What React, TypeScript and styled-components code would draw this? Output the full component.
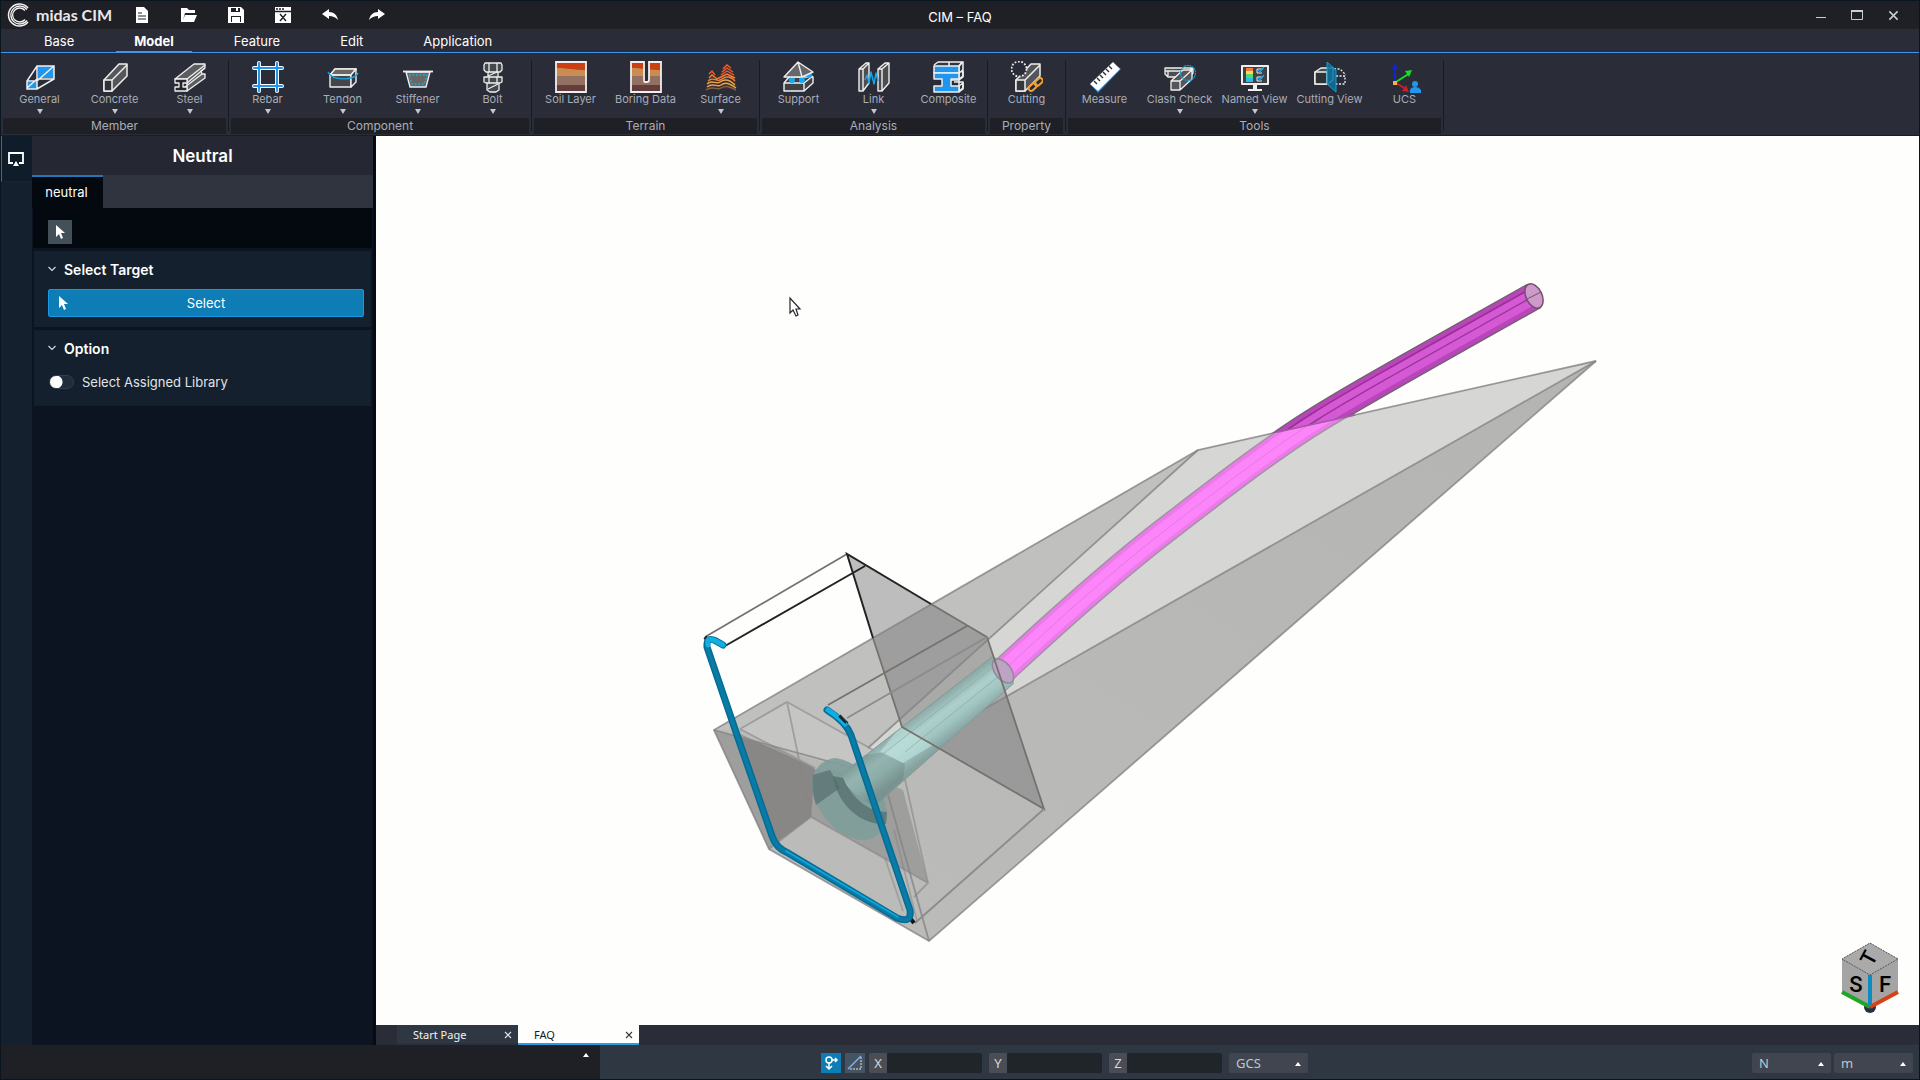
import React, { useState } from "react";
import styled, { createGlobalStyle } from "styled-components";

const GlobalStyle = createGlobalStyle`
  *, *::before, *::after { box-sizing: border-box; }
  html, body { margin: 0; }
  body { background: #0b1119; }
  button, input, select { font: inherit; color: inherit; margin: 0; }
  button { background: none; border: 0; padding: 0; cursor: pointer; }
`;

const uiFont = `Inter, "Liberation Sans", sans-serif`;
const statusFont = `"Noto Sans", "Open Sans", sans-serif`;

const Shell = styled.div`
  display: flex;
  flex-direction: column;
  height: 100vh;
  min-height: 600px;
  border: 1px solid #0b1520;
  font-family: ${uiFont};
  font-size: 13px;
  color: #fff;
  background: #0b1420;
  overflow: hidden;
`;

const TitleBar = styled.header`
  display: grid;
  grid-template-columns: 1fr auto 1fr;
  align-items: center;
  height: 28px;
  flex: none;
  background: #1f2026;
`;
const TitleLeft = styled.div`
  display: flex;
  align-items: center;
  padding-left: 6px;
`;
const Brand = styled.div`
  display: flex;
  align-items: center;
  gap: 5px;
  width: 111px;
  font-family: Lato, ${uiFont};
  font-weight: 700;
  font-size: 16px;
  line-height: 24px;
  color: #e8e8ea;
`;
const QuickButton = styled.button`
  width: 47px;
  height: 24px;
  display: grid;
  place-items: center;
`;
const WindowTitle = styled.h1`
  margin: 0;
  padding-top: 4px;
  font-size: 13px;
  font-weight: 400;
  line-height: 20px;
`;
const WindowButtons = styled.div`
  display: flex;
  justify-content: flex-end;
  padding-right: 8px;
`;
const WindowButton = styled.button`
  width: 36px;
  height: 26px;
  display: grid;
  place-items: center;
`;

const MenuBar = styled.nav`
  display: flex;
  gap: 24px;
  height: 24px;
  flex: none;
  padding-left: 25px;
  background: #2a2c37;
  border-bottom: 1px solid #3a96f0;
`;
const MenuTab = styled.button<{ $active?: boolean }>`
  height: 23px;
  padding: 3px 18px 0;
  line-height: 19px;
  font-weight: ${(p) => (p.$active ? 700 : 400)};
  border-bottom: 1px solid ${(p) => (p.$active ? "#3a96f0" : "transparent")};
`;

const Ribbon = styled.div`
  display: flex;
  flex: none;
  height: 83px;
  padding-left: 1px;
  background: #2a2c37;
  border-bottom: 1px solid #1a1d26;
`;
const RibbonGroup = styled.section`
  display: flex;
  flex-direction: column;
  padding-top: 8px;
`;
const RibbonItems = styled.div`
  display: flex;
  height: 57px;
`;
const RibbonSeparator = styled.div`
  width: 1px;
  height: 71px;
  margin: 7px 1px 0;
  background: #181b24;
`;
const RibbonButton = styled.button`
  display: flex;
  flex-direction: column;
  align-items: center;
  width: 75px;
  font-size: 11px;
  line-height: 12px;
  color: #a9adb8;
  white-space: nowrap;
  svg { flex: none; }
`;
const DropMark = styled.svg`
  margin-top: 4px;
`;
const GroupName = styled.div`
  margin: 0 1px;
  height: 16px;
  font-size: 12px;
  line-height: 16px;
  text-align: center;
  color: #a9adb8;
  background: #1f2026;
`;

const Workspace = styled.main`
  display: flex;
  flex: 1;
  min-height: 0;
`;
const Rail = styled.div`
  width: 31px;
  flex: none;
  background: #14202d;
`;
const RailButton = styled.button`
  display: grid;
  place-items: center;
  width: 31px;
  height: 46px;
  padding-right: 2px;
  border-left: 1px solid #1778ac;
  border-bottom: 1px solid #1b222c;
  background: #0f1c29;
`;
const Panel = styled.aside`
  width: 341px;
  flex: none;
  background: #0b1420;
`;
const PanelTitle = styled.h2`
  margin: 0;
  height: 39px;
  line-height: 40px;
  text-align: center;
  font-size: 17px;
  font-weight: 600;
  background: #252833;
`;
const PanelTabs = styled.div`
  display: flex;
  height: 33px;
  background: #2f343f;
`;
const PanelTab = styled.button`
  width: 71px;
  padding: 0 2px 2px 0;
  border-top: 2px solid #2676b5;
  background: #03090f;
`;
const PanelTools = styled.div`
  height: 40px;
  margin: 0 1px;
  padding: 12px 15px;
  background: #03090f;
`;
const PointerButton = styled.button`
  display: grid;
  place-items: center;
  width: 24px;
  height: 24px;
  background: #435059;
`;
const PanelSection = styled.section`
  height: 76px;
  margin: 3px 2px 0;
  padding: 6px 7px 0 14px;
  background: #14202d;
`;
const SectionTitle = styled.button`
  display: flex;
  align-items: center;
  gap: 8px;
  height: 24px;
  font-size: 14px;
  font-weight: 600;
`;
const SelectButton = styled.button`
  display: flex;
  align-items: center;
  width: 100%;
  height: 28px;
  margin-top: 8px;
  padding: 0 8px;
  border: 1px solid #1a98e8;
  border-radius: 2px;
  background: #0e7db5;
  span { flex: 1; padding-right: 12px; text-align: center; }
`;
const SwitchLabel = styled.label`
  display: flex;
  align-items: center;
  gap: 8px;
  height: 20px;
  margin-top: 12px;
  padding-left: 1px;
  color: #e0e4e8;
`;
const Switch = styled.input`
  appearance: none;
  width: 25px;
  height: 14px;
  border: 1px solid #343d4e;
  border-radius: 7px;
  background: radial-gradient(circle at 6px 6px, #fff 6px, transparent 7px) #222c3b;
  &:checked {
    background: radial-gradient(circle at 17px 6px, #fff 6px, transparent 7px) #0e7db5;
  }
`;

const Documents = styled.div`
  display: flex;
  flex-direction: column;
  flex: 1;
  min-width: 0;
  border-left: 3px solid #050a14;
`;
const Viewport = styled.div`
  position: relative;
  flex: 1;
  min-height: 0;
  background: #fefefd;
`;
const SceneSvg = styled.svg`
  display: block;
  width: 100%;
  height: 100%;
`;
const NavCube = styled.svg`
  position: absolute;
  right: 19px;
  bottom: 11px;
`;
const DocTabs = styled.div`
  display: flex;
  height: 20px;
  flex: none;
  padding-left: 21px;
  background: #2a2c37;
  font-family: ${statusFont};
  font-size: 11px;
`;
const DocTab = styled.div<{ $active?: boolean }>`
  display: flex;
  align-items: center;
  justify-content: space-between;
  width: 121px;
  height: 20px;
  padding: 2px 6px 0 16px;
  color: ${(p) => (p.$active ? "#15181c" : "#f1f3f5")};
  background: ${(p) => (p.$active ? "#fefefd" : "#2f3742")};
  border-bottom: 2px solid ${(p) => (p.$active ? "#2a9be6" : "#2b323d")};
  button { line-height: 16px; }
  button:last-child { display: grid; place-items: center; }
`;

const StatusBar = styled.footer`
  display: flex;
  flex: none;
  height: 34px;
  background: #2f3742;
  font-family: ${statusFont};
  font-size: 13px;
`;
const MessagePane = styled.div`
  display: flex;
  justify-content: flex-end;
  align-items: flex-start;
  width: 599px;
  flex: none;
  padding: 7px 10px 0 0;
  background: #1f2026;
`;
const MessageToggle = styled.button`
  display: grid;
  place-items: center;
  width: 8px;
  height: 6px;
`;
const StatusMain = styled.div`
  display: flex;
  flex: 1;
  align-items: flex-start;
  padding: 8px 3px 0 221px;
`;
const StatusToggle = styled.button<{ $active?: boolean }>`
  display: grid;
  place-items: center;
  width: 20px;
  height: 20px;
  margin-right: 4px;
  background: ${(p) => (p.$active ? "#0e7db5" : "#465462")};
`;
const Coordinate = styled.label`
  display: flex;
  height: 20px;
  margin-right: 7px;
  line-height: 20px;
  color: #d6dadd;
  span { width: 18px; text-align: center; background: #4a4d56; border-radius: 2px 0 0 2px; }
  input { width: 95px; padding: 0 4px; border: 0; border-radius: 0 2px 2px 0; background: #1f2529; }
`;
const UnitBox = styled.span`
  position: relative;
  width: 79px;
  height: 20px;
  margin-right: 3px;
  select {
    appearance: none;
    display: block;
    width: 100%;
    height: 20px;
    padding: 0 7px;
    border: 0;
    border-radius: 2px;
    color: #bcc7d3;
    background: #41454f;
  }
  svg { position: absolute; right: 7px; top: 9px; pointer-events: none; }
`;
const Spacer = styled.div`
  flex: 1;
`;

const UpMark = () => (
  <svg width="6" height="4" viewBox="0 0 6 4" aria-hidden="true"><path d="M3 0 6 4H0Z" fill="#fff" /></svg>
);
const Cross = ({ color, size = 8 }: { color: string; size?: number }) => (
  <svg width={size} height={size} viewBox="0 0 8 8" aria-hidden="true">
    <path d="M1 1l6 6M7 1 1 7" stroke={color} strokeWidth="1.1" />
  </svg>
);
const Pointer = () => (
  <svg width="12" height="16" viewBox="0 0 12 16" aria-hidden="true">
    <path d="M2 1v12l3-3 2 5 2-1-2-5h4Z" fill="#fff" />
  </svg>
);
const Chevron = () => (
  <svg width="8" height="6" viewBox="0 0 8 6" aria-hidden="true">
    <path d="M.5 1 4 4.5 7.500 1" fill="none" stroke="#d8dde2" strokeWidth="1.1" />
  </svg>
);

const W = "#f0efed";
const B = "#2196ef";
const G = "#5b5d63";

const ribbonIcons: Record<string, React.ReactNode> = {
  General: (
    <g fill="none" stroke={W} strokeWidth="1.5">
      <path d="M14 5h16v12H14Z" fill={B} stroke="none" />
      <path d="M3 21h10v7H3Z" fill={B} stroke="none" />
      <path d="M13 5h17v13L13 28H3v-8ZM3 20h10v8M13 20 30 5M13 5v13l17 0M13 18 3 27" />
    </g>
  ),
  Concrete: (
    <g stroke={W} strokeWidth="1.5" strokeLinejoin="round">
      <path d="M5 19 20 3h8v12L13 30H5Z" fill="#55565b" />
      <path d="M5 19h8v11H5Z" fill="#303238" />
      <path d="M13 19 28 4" fill="none" />
    </g>
  ),
  Steel: (
    <g stroke={W} strokeWidth="1.3" strokeLinejoin="round">
      <path d="M1 18 20 3h11v4l-4 3 1 3h3v4L13 30V18Z" fill={G} />
      <path d="M13 18 31 4M13 22 31 7M11 26 28 13" fill="none" />
      <path d="M1 18h12v4H9v4h4v4H1v-4h4v-4H1Z" fill="#26282f" />
    </g>
  ),
  Rebar: (
    <g strokeLinecap="round">
      <path d="M7 2v28M25 2v28M2 7h28M2 25h28" stroke="#fff" strokeWidth="4" />
      <path d="M7 2v28M25 2v28M2 7h28M2 25h28" stroke={B} strokeWidth="2.200" />
    </g>
  ),
  Tendon: (
    <g stroke={W} strokeWidth="1.4" strokeLinejoin="round">
      <path d="M3 14 8 8h21l-5 6v12H3Z" fill="#44464c" />
      <path d="M3 14 8 8h21l-5 6Z" fill="#6b6765" />
      <path d="M24 14v12l5-5V8ZM3 14h21" fill="#34363d" />
      <path d="M1 11c4 9 27 9 30 1" fill="none" stroke="#17a6e6" />
    </g>
  ),
  Stiffener: (
    <g>
      <path d="M4 11h24l-4 15H8Z" fill="#696663" stroke={W} strokeWidth="1.400" />
      <path d="M1 10.500h30" stroke={W} strokeWidth="1.800" />
      <path d="M7 14h18l-3 9H10Z" fill="none" stroke="#18a9ec" strokeWidth="1.300" strokeDasharray="2 1.500" />
    </g>
  ),
  Bolt: (
    <g fill="#44484f" stroke={W} strokeWidth="1.300" strokeLinejoin="round">
      <path d="M8 2h16l1 2v5l-2 2H9L7 9V4ZM12 2v9M20 2v9M11 11h10v5H11ZM7 16h18v5l-2 1H9l-2-1ZM12 16v6M20 16v6M10 22h12v7l-3 2h-6l-3-2Z" />
      <path d="m11 15 9-4M11 28l10-5" />
    </g>
  ),
  "Soil Layer": (
    <g>
      <path d="M1 1h30v30H1Z" fill="#cb4012" />
      <path d="M1 7c11 0 16 2 30 2v7H1Z" fill="#c98d52" />
      <path d="M1 15h30v10H1Z" fill="#947062" />
      <path d="M1 24h30v7H1Z" fill="#633d3b" />
      <path d="M1 1h30v30H1Z" fill="none" stroke={W} strokeWidth="1.800" />
    </g>
  ),
  "Boring Data": (
    <g>
      <path d="M1 1h30v30H1Z" fill="#cb4012" />
      <path d="M1 7c11 0 16 2 30 2v7H1Z" fill="#c98d52" />
      <path d="M1 15h30v10H1Z" fill="#947062" />
      <path d="M1 24h30v7H1Z" fill="#633d3b" />
      <path d="M13 0h6v19q0 2-3 2t-3-2Z" fill="#2a2c37" />
      <path d="M14 1H1v30h30V1H19v18q0 2-2 2h-2q-1 0-1-2Z" fill="none" stroke={W} strokeWidth="1.800" />
    </g>
  ),
  Surface: (
    <g fill="none" strokeWidth="1.400">
      <path d="M1 28 4 12l3-3 4 9 4-6 4-9 4-1 8 14v13Z" fill="#39302f" />
      <path d="m18 8 4-4 4 3M17 11l5-4 6 4M16 14l6-4 7 4M4 13l3-3 3 4" stroke="#ef5a30" />
      <path d="m4 17 3-3 5 4 10-5 8 4M3 20c5-5 8 1 12-1s8-6 15 1" stroke="#f08035" />
      <path d="M2 23c5-5 9 1 13-2s9-3 15 3M2 26c6-5 10 1 14-2s8-2 15 3" stroke="#e8a550" />
      <path d="M1 29c8-5 10 1 15-2s9-1 15 2" stroke="#866047" />
    </g>
  ),
  Support: (
    <g stroke={W} strokeWidth="1.400" strokeLinejoin="round">
      <path d="m1 22 5-6h24v6l-9 8H1Z" fill="#3f4147" />
      <path d="M1 22h20v8M21 22l9-7" fill="none" />
      <circle cx="9" cy="19" r="3" fill="#14a7f3" stroke="none" />
      <circle cx="19" cy="19" r="3" fill="#14a7f3" stroke="none" />
      <circle cx="26" cy="14" r="3" fill="#14a7f3" stroke="none" />
      <path d="M1 16 15 1l15 10-11 5ZM15 1l4 15" fill="#66676b" />
    </g>
  ),
  Link: (
    <g stroke={W} strokeWidth="1.400" strokeLinejoin="round">
      <path d="M1 8 8 2h3v20l-6 8H1ZM5 8l6-6M1 8h4v22" fill="#4b4d53" />
      <path d="m20 8 7-6h4v20l-7 8h-4ZM24 8l7-6M20 8h4v22" fill="#4b4d53" />
      <path d="m7 19 2-5 2 8 2-11 3 12 2-11 2 8" fill="none" stroke="#12a7ed" />
    </g>
  ),
  Composite: (
    <g stroke={W} strokeWidth="1.500" strokeLinejoin="round">
      <path d="m1 4 4-3h25v7l-1 3h1v5l-4 3H16V1h13l-3 4v25l4-3v-6h-9" fill="#34363d" />
      <path d="M1 5h25v7H1Z" fill={B} />
      <path d="M1 12h25v6h-8v7h8v6H1v-6h8v-7H1Z" fill={B} />
      <path d="m26 5 4-4M26 12l4-3M26 18l4-3V9M26 25l4-3v6l-4 3" fill="none" />
    </g>
  ),
  Cutting: (
    <g strokeLinejoin="round">
      <path d="M5 19 20 3h9v12L14 30H5Z" fill="#55565b" stroke={W} strokeWidth="1.500" />
      <path d="M5 19h9v11H5ZM14 19 29 4" fill="#35373d" stroke={W} strokeWidth="1.500" />
      <circle cx="8" cy="8" r="7.500" fill="#2a2c37" stroke={W} strokeWidth="1.800" strokeDasharray="1.800 1.600" />
      <g fill="none" stroke="#f2a12e" strokeWidth="2">
        <rect x="17" y="24" width="9" height="5" rx="2.500" transform="rotate(-42 21 26)" />
        <rect x="23" y="19" width="9" height="5" rx="2.500" transform="rotate(-42 27 21)" />
      </g>
    </g>
  ),
  Measure: (
    <g>
      <path d="m2 24 7 8L32 8l-4-3Z" fill="#1d87e0" />
      <path d="M1 23 24 1l7 7L9 30Z" fill="#fff" />
      <path d="m5 20 3 3m0-6 3 3m0-6 3 3m0-6 3 3m0-6 3 3m0-6 3 3" stroke="#2a2c37" strokeWidth="1.400" />
    </g>
  ),
  "Clash Check": (
    <g strokeLinejoin="round" strokeWidth="1.300" stroke={W}>
      <path d="M1 7h28v5l-3 4H4l-3-3ZM1 10h23l5-3M4 10v5" fill="#4b4d53" />
      <path d="M7 20 19 9h9v9L16 29H7ZM7 20h9v9M16 20 28 9" fill="#55565b" />
      <circle cx="24" cy="12" r="7.500" fill="none" stroke="#159dcc" strokeDasharray="2 .6" />
    </g>
  ),
  "Named View": (
    <g>
      <path d="M3 5h26v18H3Z" fill="#3d4148" stroke={W} strokeWidth="2" strokeLinejoin="round" />
      <path d="M14 24h4v4h5v2H9v-2h5Z" fill={W} />
      <path d="M7 7h7v4H7Z" fill="#f47945" /><path d="M7 10h7v3H7Z" fill="#ffe34c" />
      <path d="M7 13h7v4H7Z" fill="#51d873" /><path d="M7 17h7v4H7Z" fill="#27bce9" />
      <path d="M23 8h-5v4h5M23 16h-5v4h5" fill="none" stroke={W} />
      <path d="m19 9 2 2 4-5M19 17l2 2 4-5" fill="none" stroke="#16a8ea" strokeWidth="1.300" />
    </g>
  ),
  "Cutting View": (
    <g strokeLinejoin="round">
      <path d="m1 11 6-4h12v12l-5 4H1Z" fill="#4b4d53" stroke={W} strokeWidth="1.500" />
      <path d="M1 11h12v12H1Z" fill="#303238" stroke={W} strokeWidth="1.500" />
      <path d="M22 15h9v8h-9M20 8h6l6 6" fill="none" stroke={W} strokeWidth="1.300" strokeDasharray="2 1.500" />
      <path d="m13 1 9 8v22l-9-8Z" fill="#08729d" fillOpacity=".85" stroke="#12a1da" />
    </g>
  ),
  UCS: (
    <g>
      <path d="M6 22V5" stroke="#1026c5" strokeWidth="2" /><path d="m6 2-3 6h6Z" fill="#1026c5" />
      <path d="m7 21 14-9" stroke="#16df25" strokeWidth="2" /><path d="m23 9-7 1 4 6Z" fill="#16df25" />
      <path d="m7 22 10 6" stroke="#c91f27" strokeWidth="2" /><path d="m20 31-7-1 4-6Z" fill="#c91f27" />
      <path d="M4 20h4v4H4Z" fill="#ffac50" />
      <circle cx="26" cy="23" r="3" fill={B} /><path d="M21 32v-3q1-3 5-3t6 3v3Z" fill={B} />
    </g>
  ),
};

const ribbonGroups: { name: string; items: [string, boolean][] }[] = [
  { name: "Member", items: [["General", true], ["Concrete", true], ["Steel", true]] },
  { name: "Component", items: [["Rebar", true], ["Tendon", true], ["Stiffener", true], ["Bolt", true]] },
  { name: "Terrain", items: [["Soil Layer", false], ["Boring Data", false], ["Surface", true]] },
  { name: "Analysis", items: [["Support", false], ["Link", true], ["Composite", false]] },
  { name: "Property", items: [["Cutting", false]] },
  { name: "Tools", items: [["Measure", false], ["Clash Check", true], ["Named View", true], ["Cutting View", false], ["UCS", false]] },
];

const quickActions: { name: string; icon: React.ReactNode }[] = [
  { name: "New", icon: <><path d="M2 0h8l4 4v12H2Z" fill="#fff" /><path d="M4 6h4M4 9h8M4 12h8" stroke="#1f2026" /></> },
  { name: "Open", icon: <path d="M0 1h6l2 2h6v3H4L2 13V4v9l2-5h12l-3 7H0Z" fill="#fff" /> },
  { name: "Save", icon: <><path d="M0 0h13l3 3v13H0Z" fill="#fff" /><path d="M3 1h9v4H3ZM3 9h10v6H3Z" fill="#1f2026" /><path d="M8 1h2v3H8ZM4 10h8v6H4Z" fill="#fff" /></> },
  { name: "Close file", icon: <><path d="M0 0h16v16H0Z" fill="#fff" /><path d="M1 2h2m1 0h2m1 0h2M0 4.500h16M5 7l6 7M11 7l-6 7" stroke="#1f2026" strokeWidth="1.400" /></> },
  { name: "Undo", icon: <path d="M0 7 7 2v3c5 0 8 3 9 8-3-3-5-4-9-4v3Z" fill="#fff" /> },
  { name: "Redo", icon: <path d="M16 7 9 2v3c-5 0-8 3-9 8 3-3 5-4 9-4v3Z" fill="#fff" /> },
];

const tendonPath = "M1003 671C1060 618 1110 573 1163 532C1215 492 1270 449 1317 420C1352 398 1402 370 1534 296";
const rebarPath = "M723 645l-7-4q-10-5-9 6l30 88 35 101q4 12 16 17l109 65q15 6 13-8l-59-175q-5-13-24-25";

const Scene = () => (
  <SceneSvg viewBox="376 136 1543 889" role="img" aria-label="Anchor block model with tendon and rebar">
    <defs>
      <clipPath id="outside"><path d="M1100 136h600v202L1198 450l-98 22Z" /></clipPath>
      <linearGradient id="side" x1="0" y1="1" x2="1" y2="0">
        <stop offset="0" stopColor="#bcbcba" /><stop offset="1" stopColor="#b4b5b2" />
      </linearGradient>
      <linearGradient id="sleeve" gradientUnits="userSpaceOnUse" x1="910" y1="720" x2="934" y2="752">
        <stop offset="0" stopColor="#8ba9a6" /><stop offset=".35" stopColor="#aed0cc" />
        <stop offset=".65" stopColor="#a0c5c1" /><stop offset="1" stopColor="#86a19e" />
      </linearGradient>
    </defs>

    <path d="M714 730 1198 450 1596 361 929 941 769 849Z" fill="url(#side)" />
    <path d="M1198 450 1596 361 900 757 868 748Z" fill="#d6d7d4" />
    <path d="M714 730 1198 450 868 748 784 702 740 729Z" fill="#c0c1be" />

    <path d="M847 554 987 637 1044 809 902 727Z" fill="#77777a" fillOpacity=".48" />

    <path d="M714 730 865 774 903 790 928 883 811 817 769 849Z" fill="#777" fillOpacity=".42" />
    <path d="M738 733 815 768 811 817 775 843 742 742Z" fill="#66605e" fillOpacity=".38" />
    <path d="M740 729 787 702 902 766 860 773 815 769Z" fill="#d0d0cd" fillOpacity=".5" />

    <g fill="none" stroke="#858588" strokeWidth="1.800" strokeOpacity=".8">
      <path d="M714 730 1198 450 1596 361 929 941 769 849Z" />
      <path d="M1198 450 868 748M1596 361 900 757M714 730l146 40" />
      <path d="M885 784 929 941" />
      <path d="M740 729l47-27 115 64 26 117-14 14M787 702l24 115-42 32M811 817l117 66M740 729l75 39" strokeOpacity=".6" />
      <path d="M885 858 903 911M894 830l23 91" strokeOpacity=".5" />
    </g>

    <path d="M835 758C857 760 885 787 887 812C888 827 877 841 862 840C833 837 812 807 812 783C813 770 822 759 835 758Z" fill="#7f9e9b" fillOpacity=".92" />
    <path d="M813 775 830 770 840 788 816 805Q811 790 813 775Z" fill="#5f7577" fillOpacity=".85" />
    <path d="M833 776C836 802 860 826 886 824L887 812C868 812 852 798 843 778Z" fill="#566c6e" fillOpacity=".75" />
    <path d="M992 657Q1014 660 1014 683L884 798Q874 810 862 798 844 788 843 773Z" fill="url(#sleeve)" />
    <path d="M865 755 884 752 905 764 903 780 884 798Q874 810 862 798 846 790 843 773Z" fill="#5c7472" fillOpacity=".3" />
    <path d="M900 727 933 745 903 763 880 752Z" fill="#bfe4e0" fillOpacity=".6" />
    <path d="M1004 672 905 752M992 668l-118 93" fill="none" stroke="#8aa9a6" strokeOpacity=".7" />
    <path d="M992 657 843 773M1014 683 884 798" fill="none" stroke="#839a97" />

    <path d={tendonPath} fill="none" stroke="#a391a6" strokeWidth="27" />
    <path d={tendonPath} fill="none" stroke="#ec7bea" strokeWidth="24" />
    <path d={tendonPath} fill="none" stroke="#fd85fa" strokeWidth="17" />
    <path d={tendonPath} fill="none" stroke="#e875e8" strokeWidth="1" />
    <g clipPath="url(#outside)" fill="none">
      <path d={tendonPath} stroke="#796078" strokeWidth="28" />
      <path d={tendonPath} stroke="#b846ba" strokeWidth="25" />
      <path d={tendonPath} stroke="#d558d5" strokeWidth="16" />
      <path d={tendonPath} stroke="#9b359a" strokeWidth="1.500" />
      <path d={tendonPath} stroke="#9b2e94" strokeWidth="1.500" transform="translate(-4 -7)" />
    </g>
    <ellipse cx="1534" cy="296" rx="8" ry="13" transform="rotate(-25 1534 296)" fill="#ce9aca" stroke="#73506e" strokeWidth="1.500" />
    <path d="m1527 299 14-7" stroke="#73506e" />
    <path d="m1278 432 77-17" stroke="#a05ca3" strokeWidth="1.500" />
    <ellipse cx="1003" cy="671" rx="8" ry="14" transform="rotate(-38 1003 671)" fill="#bda3c4" stroke="#8d8b93" strokeWidth="1.500" />

    <g fill="none" stroke="#77716e" strokeWidth="1.800">
      <path d="M931 604 987 637 1044 809 902 727 873 638M967 626 828 705M705 637 847 554" />
      <path d="M987 637 847 718M1044 809 915 923" stroke="#8c8b8a" />
    </g>
    <path d="M873 638 847 554 931 604M865 566 725 646" fill="none" stroke="#232323" strokeWidth="2" />
    <path d="M705 637l5 6M839 716l8 8M910 918l4 5" stroke="#111" strokeWidth="4" />

    <path d={rebarPath} fill="none" stroke="#066c94" strokeWidth="7" strokeLinecap="round" strokeLinejoin="round" />
    <path d={rebarPath} fill="none" stroke="#087ca7" strokeWidth="4" strokeLinecap="round" strokeLinejoin="round" />
    <path d="M723 645l-7-4q-10-5-8 4M828 710q12 8 17 14" fill="none" stroke="#10aee2" strokeWidth="5" strokeLinecap="round" />
    <path d="M786 851l112 66" fill="none" stroke="#10a4d8" strokeWidth="2" strokeLinecap="round" />
    <path d="M839 716l7 7" stroke="#102028" strokeWidth="2" />

    <path d="M790 298v15l3-3 3 6 2-1-2-6h4Z" fill="#fff" stroke="#25252d" strokeWidth="1.200" />
  </SceneSvg>
);

const cubeLetter = { fontFamily: "Roboto, sans-serif", fontWeight: 500, textAnchor: "middle" as const };

const Cube = () => (
  <NavCube width="60" height="72" viewBox="0 0 60 72" role="img" aria-label="View cube">
    <circle cx="30" cy="65" r="6" fill="#292f42" />
    <path d="M30 1 58 17v32L30 65 2 49V17Z" fill="#a4a4a4" />
    <path d="M30 1 58 17 30 33 2 17Z" fill="#aaa" stroke="#555960" strokeDasharray="2 1" />
    <path d="m2 50 28 15" stroke="#20a527" strokeWidth="4" />
    <path d="m30 65 28-15" stroke="#d64218" strokeWidth="4" />
    <path d="M30 33v31" stroke="#0b8cc0" strokeWidth="4" />
    <text {...cubeLetter} fontSize="21" transform="translate(29 16) rotate(-62)" x="0" y="7">T</text>
    <text {...cubeLetter} fontSize="22" x="16" y="50">S</text>
    <text {...cubeLetter} fontSize="22" x="45" y="50">F</text>
  </NavCube>
);

const Unit = ({ label, options }: { label: string; options: string[] }) => (
  <UnitBox>
    <select aria-label={label}>{options.map((o) => <option key={o}>{o}</option>)}</select>
    <UpMark />
  </UnitBox>
);

export default function App() {
  const [menu, setMenu] = useState("Model");
  const [assigned, setAssigned] = useState(false);

  return (
    <>
      <GlobalStyle />
      <Shell>
        <TitleBar>
          <TitleLeft>
            <Brand>
              <svg width="24" height="24" viewBox="0 0 24 24" fill="none" stroke="#f3f3f3" aria-hidden="true">
                <path d="M21 5A11 11 0 1 0 21 19" strokeWidth="1.500" />
                <path d="M20 6.500A9 9 0 1 0 20 17.500" strokeWidth="1.300" />
                <path d="M18 7.500A7 7 0 1 0 18 16.500" strokeWidth="1.300" />
              </svg>
              midas CIM
            </Brand>
            {quickActions.map((a) => (
              <QuickButton key={a.name} aria-label={a.name}>
                <svg width="16" height="16" viewBox="0 0 16 16" aria-hidden="true">{a.icon}</svg>
              </QuickButton>
            ))}
          </TitleLeft>
          <WindowTitle>CIM – FAQ</WindowTitle>
          <WindowButtons>
            <WindowButton aria-label="Minimize">
              <svg width="10" height="10"><path d="M0 7.500h10" stroke="#c5d0d3" /></svg>
            </WindowButton>
            <WindowButton aria-label="Maximize">
              <svg width="12" height="10"><path d="M.5 1h11v8.500H.5Z" fill="none" stroke="#c5d0d3" /><path d="M0 1h12" stroke="#c5d0d3" strokeWidth="2" /></svg>
            </WindowButton>
            <WindowButton aria-label="Close"><Cross color="#c5d0d3" size={11} /></WindowButton>
          </WindowButtons>
        </TitleBar>

        <MenuBar>
          {["Base", "Model", "Feature", "Edit", "Application"].map((m) => (
            <MenuTab key={m} $active={menu === m} onClick={() => setMenu(m)}>{m}</MenuTab>
          ))}
        </MenuBar>

        <Ribbon>
          {ribbonGroups.map((g) => (
            <React.Fragment key={g.name}>
              <RibbonGroup>
                <RibbonItems>
                  {g.items.map(([name, drop]) => (
                    <RibbonButton key={name}>
                      <svg width="32" height="32" viewBox="0 0 32 32" fill="none" aria-hidden="true">{ribbonIcons[name]}</svg>
                      {name}
                      {drop && <DropMark width="6" height="5" viewBox="0 0 6 5"><path d="M0 0h6L3 5Z" fill="#c4c7cd" /></DropMark>}
                    </RibbonButton>
                  ))}
                </RibbonItems>
                <GroupName>{g.name}</GroupName>
              </RibbonGroup>
              <RibbonSeparator />
            </React.Fragment>
          ))}
        </Ribbon>

        <Workspace>
          <Rail>
            <RailButton aria-label="Display panel">
              <svg width="16" height="14" viewBox="0 0 16 14" aria-hidden="true">
                <path d="M5 11H1V1h14v10h-4" fill="none" stroke="#fff" strokeWidth="1.800" />
                <path d="m8 9 3 5H5Z" fill="#fff" />
              </svg>
            </RailButton>
          </Rail>
          <Panel>
            <PanelTitle>Neutral</PanelTitle>
            <PanelTabs><PanelTab>neutral</PanelTab></PanelTabs>
            <PanelTools><PointerButton aria-label="Pick"><Pointer /></PointerButton></PanelTools>
            <PanelSection>
              <SectionTitle><Chevron />Select Target</SectionTitle>
              <SelectButton><Pointer /><span>Select</span></SelectButton>
            </PanelSection>
            <PanelSection>
              <SectionTitle><Chevron />Option</SectionTitle>
              <SwitchLabel>
                <Switch type="checkbox" checked={assigned} onChange={(e) => setAssigned(e.target.checked)} />
                Select Assigned Library
              </SwitchLabel>
            </PanelSection>
          </Panel>
          <Documents>
            <Viewport>
              <Scene />
              <Cube />
            </Viewport>
            <DocTabs>
              <DocTab>
                <button>Start Page</button>
                <button aria-label="Close Start Page"><Cross color="#e4e7ea" /></button>
              </DocTab>
              <DocTab $active>
                <button>FAQ</button>
                <button aria-label="Close FAQ"><Cross color="#33373c" /></button>
              </DocTab>
            </DocTabs>
          </Documents>
        </Workspace>

        <StatusBar>
          <MessagePane>
            <MessageToggle aria-label="Show messages"><UpMark /></MessageToggle>
          </MessagePane>
          <StatusMain>
            <StatusToggle $active aria-label="Relative coordinates">
              <svg width="16" height="16" viewBox="0 0 16 16" fill="none" stroke="#fff" strokeWidth="1.500" aria-hidden="true">
                <circle cx="6" cy="5" r="3" /><path d="M9 5h5M12 3l2 2-2 2M6 8v6M3 11l3 3 3-3" />
              </svg>
            </StatusToggle>
            <StatusToggle aria-label="Triangle snap">
              <svg width="16" height="16" viewBox="0 0 16 16" fill="none" aria-hidden="true">
                <path d="M1 14 14 1" stroke="#7fb2ec" strokeWidth="1.400" />
                <path d="M14 2v12H2" stroke="#dfe4e8" strokeDasharray="2 1" />
              </svg>
            </StatusToggle>
            {["X", "Y", "Z"].map((axis) => (
              <Coordinate key={axis}><span>{axis}</span><input type="text" /></Coordinate>
            ))}
            <Unit label="Coordinate system" options={["GCS", "UCS"]} />
            <Spacer />
            <Unit label="Force unit" options={["N", "kN"]} />
            <Unit label="Length unit" options={["m", "mm"]} />
          </StatusMain>
        </StatusBar>
      </Shell>
    </>
  );
}
